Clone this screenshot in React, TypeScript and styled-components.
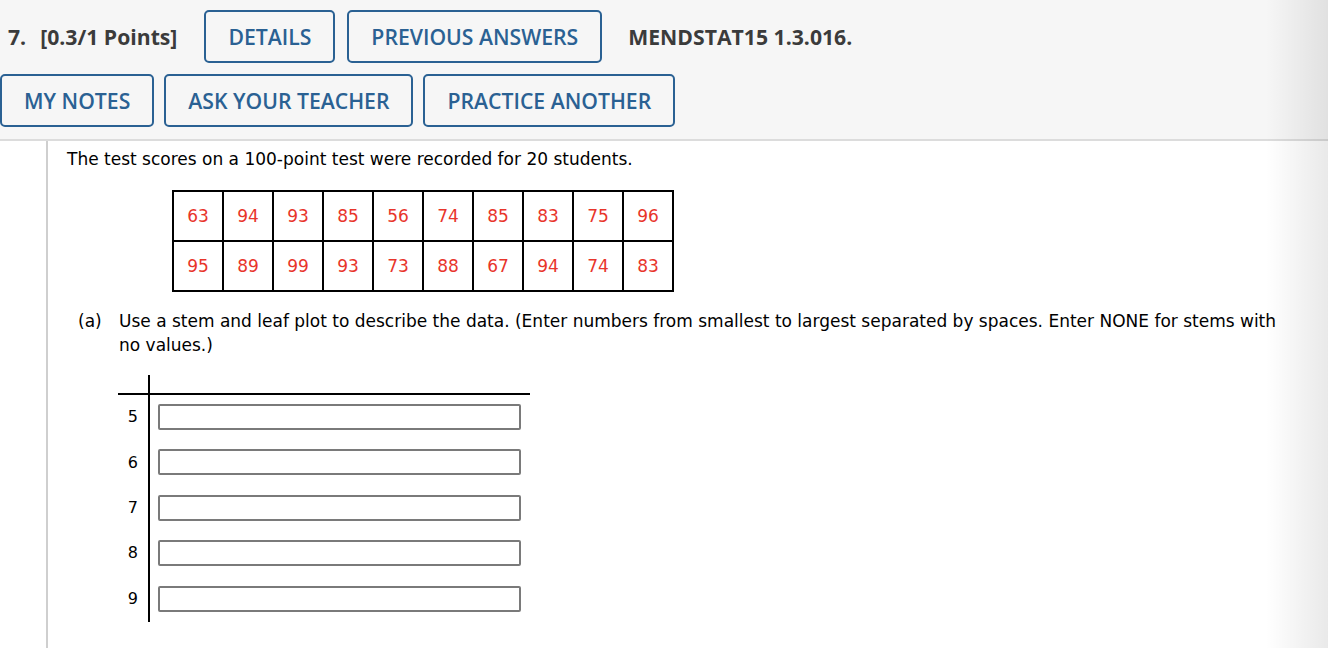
import styled, { createGlobalStyle } from 'styled-components';

const GlobalStyle = createGlobalStyle`
  html, body {
    margin: 0;
    padding: 0;
    background: #ffffff;
  }
  body {
    font-family: "DejaVu Sans", Verdana, sans-serif;
    color: #000;
  }
`;

const Page = styled.div`
  min-height: 648px;
  position: relative;
  overflow: hidden;
  display: flex;
  flex-direction: column;
`;

const Header = styled.div`
  background: #f6f6f6;
  border-bottom: 2px solid #dcdcdc;
  padding: 10px 0 12px;
  display: flex;
  flex-direction: column;
  gap: 11px;
  font-family: "Open Sans", sans-serif;
`;

const HeaderRow = styled.div<{ $indent?: number; $gap: number }>`
  display: flex;
  align-items: center;
  gap: ${({ $gap }) => $gap}px;
  padding-left: ${({ $indent }) => $indent ?? 0}px;
`;

const Label = styled.div`
  font-size: 21.2px;
  font-weight: 700;
  color: #3b3b3b;
  white-space: nowrap;
`;

const Num = styled.span`
  margin-right: 14px;
`;

const ActionButton = styled.button`
  height: 53px;
  box-sizing: border-box;
  padding: 0 22px;
  background: transparent;
  border: 2px solid #2a6193;
  border-radius: 5px;
  color: #2a6193;
  font-family: "Open Sans", sans-serif;
  font-size: 21.2px;
  font-weight: 600;
  white-space: nowrap;
`;

const ButtonGroup = styled.div`
  display: flex;
  gap: 12px;
  margin: 0 26px 0 27px;
`;

const Content = styled.div`
  flex: 1;
  margin-left: 46px;
  border-left: 2px solid #cfcfcf;
  padding: 6px 30px 28px 19px;
  font-size: 17px;
  line-height: 24px;
`;

const Intro = styled.p`
  margin: 0;
`;

const ScoreTable = styled.table`
  border-collapse: collapse;
  margin: 19px 0 17px 105px;
  border: 2px solid #000;
`;

const ScoreCell = styled.td`
  width: 48px;
  height: 48px;
  padding: 0;
  border: 2px solid #000;
  text-align: center;
  color: #e8352b;
`;

const Part = styled.div`
  display: grid;
  grid-template-columns: 41px 1fr;
  padding-left: 11px;
`;

const Plot = styled.div`
  margin: 18px 0 0 51px;
  display: grid;
  grid-template-columns: 30px 382px;
`;

const PlotHead = styled.div<{ $leaf?: boolean }>`
  height: 18px;
  border-bottom: 2px solid #000;
  ${({ $leaf }) => ($leaf ? 'border-left: 2px solid #000;' : '')}
`;

const Stem = styled.div`
  height: 45.4px;
  display: flex;
  align-items: center;
  justify-content: flex-end;
  padding-right: 10px;
  box-sizing: border-box;
  padding-bottom: 1px;
  font-size: 16px;
`;

const Leaf = styled.div`
  height: 45.4px;
  border-left: 2px solid #000;
  padding: 9px 0 0 8px;
  box-sizing: border-box;
`;

const LeafInput = styled.input`
  display: block;
  width: 363px;
  height: 26px;
  box-sizing: border-box;
  border: 2px solid #7a7a7a;
  border-radius: 2px;
  background: #fff;
  margin: 0;
`;

const EdgeShade = styled.div`
  position: absolute;
  top: 0;
  right: 0;
  width: 62px;
  height: 100%;
  pointer-events: none;
  background: linear-gradient(to right, rgba(0, 0, 0, 0), rgba(0, 0, 0, 0.085));
`;

const rows = [
  [63, 94, 93, 85, 56, 74, 85, 83, 75, 96],
  [95, 89, 99, 93, 73, 88, 67, 94, 74, 83],
];

const stems = [5, 6, 7, 8, 9];

export default function App() {
  return (
    <Page>
      <GlobalStyle />
      <Header>
        <HeaderRow $indent={8} $gap={0}>
          <Label>
            <Num>7.</Num>[0.3/1 Points]
          </Label>
          <ButtonGroup>
            <ActionButton>DETAILS</ActionButton>
            <ActionButton>PREVIOUS ANSWERS</ActionButton>
          </ButtonGroup>
          <Label>MENDSTAT15 1.3.016.</Label>
        </HeaderRow>
        <HeaderRow $gap={10}>
          <ActionButton>MY NOTES</ActionButton>
          <ActionButton>ASK YOUR TEACHER</ActionButton>
          <ActionButton>PRACTICE ANOTHER</ActionButton>
        </HeaderRow>
      </Header>
      <Content>
        <Intro>The test scores on a 100-point test were recorded for 20 students.</Intro>
        <ScoreTable>
          <tbody>
            {rows.map((row, i) => (
              <tr key={i}>
                {row.map((v, j) => (
                  <ScoreCell key={j}>{v}</ScoreCell>
                ))}
              </tr>
            ))}
          </tbody>
        </ScoreTable>
        <Part>
          <span>(a)</span>
          <span>
            Use a stem and leaf plot to describe the data. (Enter numbers from smallest to largest
            separated by spaces. Enter NONE for stems with no values.)
          </span>
        </Part>
        <Plot>
          <PlotHead />
          <PlotHead $leaf />
          {stems.map((s) => (
            <>
              <Stem key={`s${s}`}>{s}</Stem>
              <Leaf key={`l${s}`}>
                <LeafInput type="text" />
              </Leaf>
            </>
          ))}
        </Plot>
      </Content>
      <EdgeShade />
    </Page>
  );
}
